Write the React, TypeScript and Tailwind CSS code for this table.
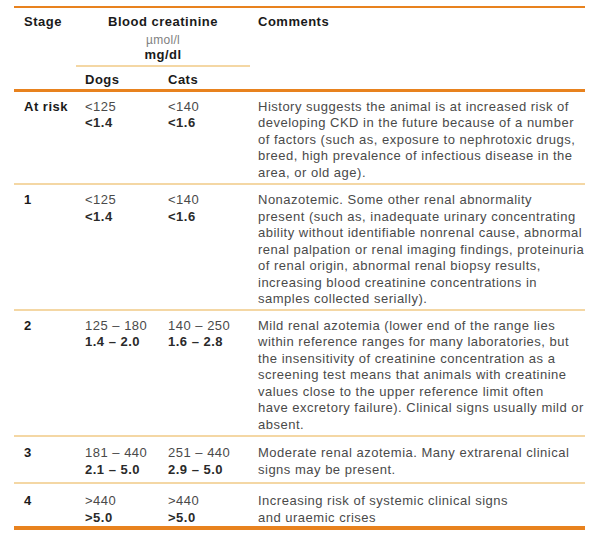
const ROWS = [
  {
    stage: "At risk",
    dogs: ["<125", "<1.4"],
    cats: ["<140", "<1.6"],
    pad: "pt-[7px] pb-[2px]",
    comment: [
      "History suggests the animal is at increased risk of",
      "developing CKD in the future because of a number",
      "of factors (such as, exposure to nephrotoxic drugs,",
      "breed, high prevalence of infectious disease in the",
      "area, or old age).",
    ],
  },
  {
    stage: "1",
    dogs: ["<125", "<1.4"],
    cats: ["<140", "<1.6"],
    pad: "pt-[7px] pb-[1px]",
    comment: [
      "Nonazotemic. Some other renal abnormality",
      "present (such as, inadequate urinary concentrating",
      "ability without identifiable nonrenal cause, abnormal",
      "renal palpation or renal imaging findings, proteinuria",
      "of renal origin, abnormal renal biopsy results,",
      "increasing blood creatinine concentrations in",
      "samples collected serially).",
    ],
  },
  {
    stage: "2",
    dogs: ["125 – 180", "1.4 – 2.0"],
    cats: ["140 – 250", "1.6 – 2.8"],
    pad: "pt-[7px] pb-[2px]",
    comment: [
      "Mild renal azotemia (lower end of the range lies",
      "within reference ranges for many laboratories, but",
      "the insensitivity of creatinine concentration as a",
      "screening test means that animals with creatinine",
      "values close to the upper reference limit often",
      "have excretory failure). Clinical signs usually mild or",
      "absent.",
    ],
  },
  {
    stage: "3",
    dogs: ["181 – 440", "2.1 – 5.0"],
    cats: ["251 – 440", "2.9 – 5.0"],
    pad: "pt-[8px] pb-[4px]",
    comment: ["Moderate renal azotemia. Many extrarenal clinical", "signs may be present."],
  },
  {
    stage: "4",
    dogs: [">440", ">5.0"],
    cats: [">440", ">5.0"],
    pad: "pt-[9px] pb-0",
    comment: ["Increasing risk of systemic clinical signs", "and uraemic crises"],
  },
]

function Value({ lines }: { lines: string[] }) {
  return (
    <div>
      <div>{lines[0]}</div>
      <div className="font-bold text-[#2a2a2a]">{lines[1]}</div>
    </div>
  )
}

export default function App() {
  return (
    <div className="h-[536px] w-[600px] bg-white pt-[6px] pl-[14px] font-['Liberation_Sans',Arial,sans-serif] text-[13px] leading-[16.5px] tracking-[0.5px] text-[#4a4a4a]">
      <div className="w-[571px]">
        {/* header */}
        <div className="border-t-2 border-b-[3px] border-[#e8821e]">
          <div className="grid grid-cols-[62px_174px_335px] pt-[6px]">
            <div className="pl-[10px] font-bold text-[#1a1a1a]">Stage</div>
            <div className="flex flex-col items-center">
              <div className="font-bold text-[#1a1a1a]">Blood creatinine</div>
              <div className="mt-[2px] text-[12px] leading-[14px] tracking-[0.3px] text-[#808080]">µmol/l</div>
              <div className="font-bold text-[#1a1a1a]">mg/dl</div>
            </div>
            <div className="pl-[8px] font-bold text-[#1a1a1a]">Comments</div>
          </div>
          <div className="grid grid-cols-[62px_84px_90px_335px]">
            <div />
            <div className="col-span-2 mt-[2px] grid grid-cols-[84px_90px] border-t-2 border-[#f4d7a4] pt-[5px] font-bold text-[#1a1a1a]">
              <div className="pl-[9px]">Dogs</div>
              <div className="pl-[8px]">Cats</div>
            </div>
          </div>
        </div>

        {ROWS.map((row, i) => (
          <div
            key={row.stage}
            className={`grid grid-cols-[62px_84px_90px_335px] ${row.pad} ${
              i === ROWS.length - 1 ? "border-b-4 border-[#e8821e]" : "border-b-2 border-[#f4d7a4]"
            }`}
          >
            <div className="pl-[10px] font-bold text-[#1a1a1a]">{row.stage}</div>
            <div className="pl-[9px]">
              <Value lines={row.dogs} />
            </div>
            <div className="pl-[8px]">
              <Value lines={row.cats} />
            </div>
            <div className="whitespace-nowrap pl-[8px]">
              {row.comment.map((line) => (
                <div key={line}>{line}</div>
              ))}
            </div>
          </div>
        ))}
      </div>
    </div>
  )
}
